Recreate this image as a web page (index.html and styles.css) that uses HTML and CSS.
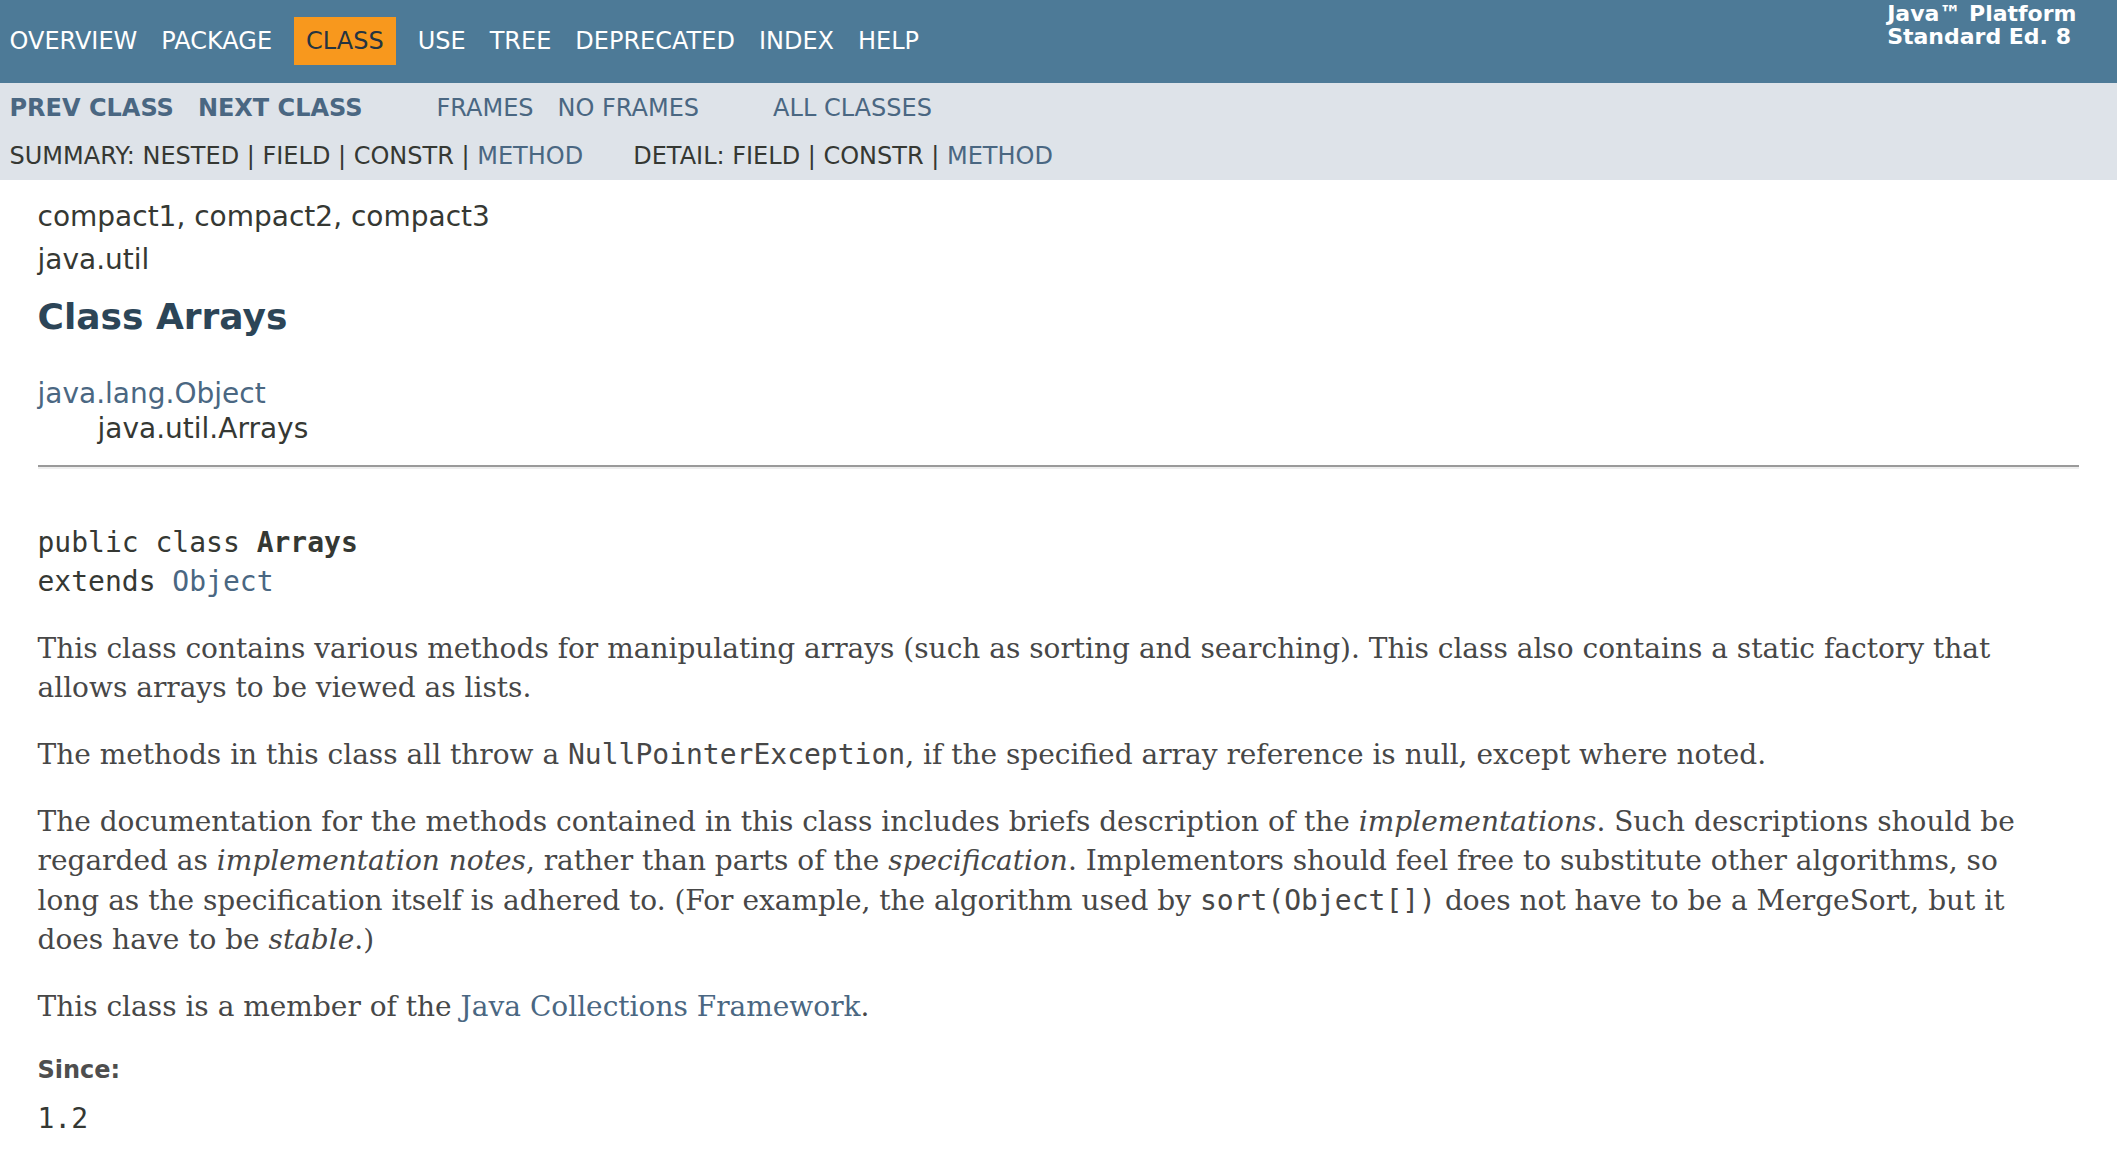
FILE: index.html
```html
<!DOCTYPE html>
<html lang="en">
<head>
<meta charset="utf-8">
<title>Arrays (Java Platform SE 8 )</title>
<link rel="stylesheet" href="styles.css">
</head>
<body>
<div class="topNav">
  <ul class="navList firstList">
    <li><a href="#">Overview</a></li>
    <li><a href="#">Package</a></li>
    <li class="navBarCell1Rev">Class</li>
    <li><a href="#">Use</a></li>
    <li><a href="#">Tree</a></li>
    <li><a href="#">Deprecated</a></li>
    <li><a href="#">Index</a></li>
    <li><a href="#">Help</a></li>
  </ul>
  <div class="aboutLanguage">Java™&nbsp;Platform<br>Standard&nbsp;Ed.&nbsp;8</div>
</div>
<div class="subNav">
  <div class="subNavTop">
    <ul class="navList firstList">
      <li><a href="#"><span class="typeNameLink">Prev&nbsp;Class</span></a></li>
      <li><a href="#"><span class="typeNameLink">Next&nbsp;Class</span></a></li>
    </ul>
    <ul class="navList">
      <li><a href="#">Frames</a></li>
      <li><a href="#">No&nbsp;Frames</a></li>
    </ul>
    <ul class="navList">
      <li><a href="#">All&nbsp;Classes</a></li>
    </ul>
  </div>
  <div class="subNavBottom">
    <ul class="subNavList">
      <li>Summary:&nbsp;</li>
      <li>Nested&nbsp;|&nbsp;</li>
      <li>Field&nbsp;|&nbsp;</li>
      <li>Constr&nbsp;|&nbsp;</li>
      <li><a href="#">Method</a></li>
    </ul>
    <ul class="subNavList">
      <li>Detail:&nbsp;</li>
      <li>Field&nbsp;|&nbsp;</li>
      <li>Constr&nbsp;|&nbsp;</li>
      <li><a href="#">Method</a></li>
    </ul>
  </div>
</div>
<div class="header">
  <div class="subTitle">compact1, compact2, compact3</div>
  <div class="subTitle">java.util</div>
  <h2 class="title">Class Arrays</h2>
</div>
<div class="contentContainer">
  <ul class="inheritance">
    <li><a href="#">java.lang.Object</a></li>
    <li>
      <ul class="inheritance nested">
        <li>java.util.Arrays</li>
      </ul>
    </li>
  </ul>
  <div class="description">
    <ul class="blockList">
      <li class="blockList">
        <hr>
        <br>
        <pre class="signature">public class <span class="typeNameLabel">Arrays</span>
extends <a href="#">Object</a></pre>
        <div class="block">This class contains various methods for manipulating arrays (such as sorting and searching). This class also contains a static factory that allows arrays to be viewed as lists.
          <p>The methods in this class all throw a <code>NullPointerException</code>, if the specified array reference is null, except where noted.</p>
          <p>The documentation for the methods contained in this class includes briefs description of the <i>implementations</i>. Such descriptions should be regarded as <i>implementation notes</i>, rather than parts of the <i>specification</i>. Implementors should feel free to substitute other algorithms, so long as the specification itself is adhered to. (For example, the algorithm used by <code>sort(Object[])</code> does not have to be a MergeSort, but it does have to be <i>stable</i>.)</p>
          <p>This class is a member of the <a href="#">Java Collections Framework</a>.</p>
        </div>
        <dl class="tags">
          <dt><span class="simpleTagLabel">Since:</span></dt>
          <dd>1.2</dd>
        </dl>
      </li>
    </ul>
  </div>
</div>
</body>
</html>
```
FILE: styles.css
```css
html, body {
  margin: 0;
  padding: 0;
}
body {
  background-color: #ffffff;
  color: #353833;
  font-family: 'DejaVu Sans', Arial, Helvetica, sans-serif;
  font-size: 28px;
}
a {
  text-decoration: none;
  color: #4A6782;
}

/* top navigation bar */
.topNav {
  display: flex;
  justify-content: space-between;
  align-items: flex-start;
  background-color: #4D7A97;
  color: #FFFFFF;
  height: 83px;
  box-sizing: border-box;
  padding-top: 17px;
  font-size: 24px;
  overflow: hidden;
}
.topNav a {
  color: #FFFFFF;
}
.navList {
  display: flex;
  margin: 0 50px 0 0;
  padding: 0;
  list-style: none;
}
.navList.firstList {
  margin-left: -2.5px;
}
.navList li {
  padding: 10px 12px;
  text-transform: uppercase;
  white-space: nowrap;
}
.navBarCell1Rev {
  background-color: #F8981D;
  color: #253441;
  margin: 0 10px;
}
.aboutLanguage {
  padding: 0 40.5px 0 42px;
  margin-top: -15px;
  font-size: 22px;
  line-height: 23px;
  font-weight: bold;
  white-space: nowrap;
}

/* sub navigation bar */
.subNav {
  background-color: #dee3e9;
  font-size: 24px;
  padding-bottom: 10px;
}
.subNavTop {
  display: flex;
  padding-top: 1px;
}
.typeNameLink {
  font-weight: bold;
}
.subNavBottom {
  display: flex;
  padding: 10px 0 0 9.5px;
}
.subNavList {
  display: flex;
  margin: 0 50px 0 0;
  padding: 0;
  list-style: none;
  text-transform: uppercase;
  white-space: nowrap;
}

/* header */
.header {
  margin: 0 38.5px 0 37.5px;
  padding-top: 10px;
}
.subTitle {
  margin-top: 10px;
}
.title {
  color: #2c4557;
  font-size: 36px;
  font-weight: bold;
  margin: 20px 0;
}

/* content */
.contentContainer {
  padding: 20px 38.5px 0 37.5px;
}
.inheritance {
  margin: 0;
  padding: 0;
  list-style: none;
}
.inheritance.nested {
  margin-left: 30px;
  padding-left: 30px;
  padding-top: 2px;
}
.blockList {
  margin: 20px 0 0;
  padding: 0;
  list-style: none;
}
li.blockList {
  line-height: 1.4;
}
hr {
  margin: 0 0 15px;
  height: 0;
  border: 0;
  border-top: 2px solid #9a9a9a;
  border-bottom: 2px solid #eeeeee;
}
.signature {
  font-family: 'DejaVu Sans Mono', monospace;
  font-size: 28px;
  margin: 0 0 27px;
}
.typeNameLabel {
  font-weight: bold;
}
.block {
  margin: 6px 20px 4px 0;
  color: #474747;
  font-family: 'DejaVu Serif', Georgia, 'Times New Roman', serif;
  font-size: 28px;
}
.block p {
  margin: 28px 0;
}
code {
  font-family: 'DejaVu Sans Mono', monospace;
  font-size: 28px;
}
.tags {
  margin: 28px 0 0;
}
.tags dt {
  font-size: 24px;
  font-weight: bold;
  color: #4E4E4E;
  margin: 20px 0 0;
}
.tags dd {
  margin: 11px 0 0;
  font-family: 'DejaVu Sans Mono', monospace;
  font-size: 28px;
}
```
